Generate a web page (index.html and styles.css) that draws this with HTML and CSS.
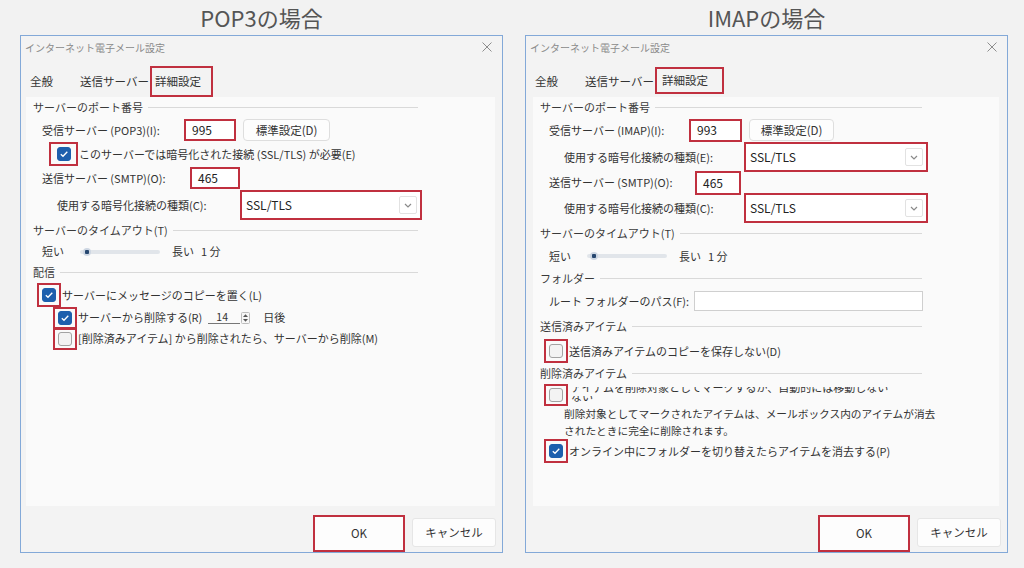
FILE: index.html
```html
<!DOCTYPE html>
<html lang="ja">

<head>
    <meta charset="UTF-8">
    <meta name="viewport" content="width=device-width, initial-scale=1.0">
    <title>POP3 / IMAP 詳細設定</title>
    <link rel="stylesheet" href="styles.css">
</head>

<body>
    <div class="page">
        <!-- POP3 -->
        <div class="column pop3">
            <h2 class="heading">POP3の場合</h2>
            <div class="dialog">
                <div class="titlebar">
                    <span>インターネット電子メール設定</span>
                    <svg class="close" width="10" height="10" viewBox="0 0 10 10"><path d="M0.5 0.5L9.5 9.5M9.5 0.5L0.5 9.5" /></svg>
                </div>
                <div class="tabs">
                    <span class="tab first">全般</span>
                    <span class="tab second">送信サーバー</span>
                    <span class="tab active">詳細設定</span>
                </div>
                <div class="panel">
                    <div class="group">サーバーのポート番号</div>
                    <div class="row">
                        <span class="lbl lbl-in">受信サーバー (POP3)(I):</span>
                        <span class="field field-in">995</span>
                        <span class="small-btn">標準設定(D)</span>
                    </div>
                    <div class="row check-row enc">
                        <span class="mark wide"><span class="box checked"><svg width="14" height="14" viewBox="0 0 14 14"><path d="M3.8 7.2L6 9.3L10.3 4.7" /></svg></span></span>
                        <span class="check-text">このサーバーでは暗号化された接続 (SSL/TLS) が必要(E)</span>
                    </div>
                    <div class="row">
                        <span class="lbl lbl-out">送信サーバー (SMTP)(O):</span>
                        <span class="field field-out">465</span>
                    </div>
                    <div class="row tall indent">
                        <span class="lbl lbl-enc">使用する暗号化接続の種類(C):</span>
                        <span class="select">SSL/TLS<span class="chevron"><svg width="8" height="5" viewBox="0 0 8 5"><path d="M1 1L4 4L7 1" /></svg></span></span>
                    </div>
                    <div class="group">サーバーのタイムアウト(T)</div>
                    <div class="row short">
                        <span class="lbl lbl-short">短い</span>
                        <span class="slider"><span class="thumb"></span></span>
                        <span>長い</span>
                        <span class="minutes">1 分</span>
                    </div>
                    <div class="group">配信</div>
                    <div class="row check-row">
                        <span class="mark"><span class="box checked"><svg width="14" height="14" viewBox="0 0 14 14"><path d="M3.8 7.2L6 9.3L10.3 4.7" /></svg></span></span>
                        <span class="check-text">サーバーにメッセージのコピーを置く(L)</span>
                    </div>
                    <div class="row short check-row sub">
                        <span class="mark"><span class="box checked"><svg width="14" height="14" viewBox="0 0 14 14"><path d="M3.8 7.2L6 9.3L10.3 4.7" /></svg></span></span>
                        <span class="check-text">サーバーから削除する(R)</span>
                        <span class="spin">14</span>
                        <svg class="spin-btn" width="9" height="12" viewBox="0 0 9 12"><rect x="0.5" y="0.5" width="8" height="11" rx="1" /><path d="M2 5L4.5 2.3L7 5Z M2 7L4.5 9.7L7 7Z" /></svg>
                        <span class="days">日後</span>
                    </div>
                    <div class="row short check-row sub">
                        <span class="mark"><span class="box"></span></span>
                        <span class="check-text">[削除済みアイテム] から削除されたら、サーバーから削除(M)</span>
                    </div>
                </div>
                <div class="footer">
                    <span class="btn ok">OK</span>
                    <span class="btn">キャンセル</span>
                </div>
            </div>
        </div>

        <!-- IMAP -->
        <div class="column imap">
            <h2 class="heading">IMAPの場合</h2>
            <div class="dialog">
                <div class="titlebar">
                    <span>インターネット電子メール設定</span>
                    <svg class="close" width="10" height="10" viewBox="0 0 10 10"><path d="M0.5 0.5L9.5 9.5M9.5 0.5L0.5 9.5" /></svg>
                </div>
                <div class="tabs">
                    <span class="tab first">全般</span>
                    <span class="tab second">送信サーバー</span>
                    <span class="tab active">詳細設定</span>
                </div>
                <div class="panel">
                    <div class="group">サーバーのポート番号</div>
                    <div class="row">
                        <span class="lbl lbl-in">受信サーバー (IMAP)(I):</span>
                        <span class="field field-in">993</span>
                        <span class="small-btn">標準設定(D)</span>
                    </div>
                    <div class="row tall indent">
                        <span class="lbl lbl-enc">使用する暗号化接続の種類(E):</span>
                        <span class="select">SSL/TLS<span class="chevron"><svg width="8" height="5" viewBox="0 0 8 5"><path d="M1 1L4 4L7 1" /></svg></span></span>
                    </div>
                    <div class="row short">
                        <span class="lbl lbl-out">送信サーバー (SMTP)(O):</span>
                        <span class="field field-out">465</span>
                    </div>
                    <div class="row tall indent">
                        <span class="lbl lbl-enc">使用する暗号化接続の種類(C):</span>
                        <span class="select">SSL/TLS<span class="chevron"><svg width="8" height="5" viewBox="0 0 8 5"><path d="M1 1L4 4L7 1" /></svg></span></span>
                    </div>
                    <div class="group">サーバーのタイムアウト(T)</div>
                    <div class="row">
                        <span class="lbl lbl-short">短い</span>
                        <span class="slider"><span class="thumb"></span></span>
                        <span>長い</span>
                        <span class="minutes">1 分</span>
                    </div>
                    <div class="group">フォルダー</div>
                    <div class="row">
                        <span class="lbl lbl-root">ルート フォルダーのパス(F):</span>
                        <span class="path-field"></span>
                    </div>
                    <div class="group loose">送信済みアイテム</div>
                    <div class="row check-row">
                        <span class="mark"><span class="box"></span></span>
                        <span class="check-text">送信済みアイテムのコピーを保存しない(D)</span>
                    </div>
                    <div class="group">削除済みアイテム</div>
                    <div class="row short check-row">
                        <span class="mark"><span class="box"></span></span>
                        <span class="ghost">
                            <span class="ghost-line"><span>アイテムを削除対象としてマークするが、自動的には移動しない</span></span>
                            <span class="ghost-line"><span>ない</span></span>
                        </span>
                    </div>
                    <div class="note">削除対象としてマークされたアイテムは、メールボックス内のアイテムが消去</div>
                    <div class="note">されたときに完全に削除されます。</div>
                    <div class="row check-row">
                        <span class="mark"><span class="box checked"><svg width="14" height="14" viewBox="0 0 14 14"><path d="M3.8 7.2L6 9.3L10.3 4.7" /></svg></span></span>
                        <span class="check-text">オンライン中にフォルダーを切り替えたらアイテムを消去する(P)</span>
                    </div>
                </div>
                <div class="footer">
                    <span class="btn ok">OK</span>
                    <span class="btn">キャンセル</span>
                </div>
            </div>
        </div>
    </div>
</body>

</html>
```

FILE: styles.css
```css
/* shared values */
:root {
    --red: #c0303f;
    --blue: #1d5fad;
    --text-color: #333;
    --line-color: #d9d9d9;
}

* {
    box-sizing: border-box;
}

body {
    margin: 0;
    background: #f2f2f2;
    font-family: "Noto Sans CJK JP", "Noto Sans", sans-serif;
    font-size: 11px;
    line-height: 1.3;
    color: var(--text-color);
}

.page {
    display: flex;
    gap: 22px;
    padding-left: 20px;
    height: 568px;
}

.column {
    width: 483px;
    display: flex;
    flex-direction: column;
}

.heading {
    margin: 0;
    height: 35px;
    line-height: 35px;
    text-align: center;
    font-size: 22px;
    font-weight: 400;
    color: #555;
}

/* dialog window */
.dialog {
    height: 518px;
    border: 1px solid #83a9d8;
    background: #f3f3f3;
    display: flex;
    flex-direction: column;
}

.titlebar {
    height: 22px;
    display: flex;
    align-items: center;
    justify-content: space-between;
    padding: 0 10px 0 4px;
    font-size: 10px;
    color: #8a8a8a;
}

.close path {
    stroke: #8d8d8d;
    stroke-width: 1;
    fill: none;
}

.tabs {
    height: 39px;
    display: flex;
    align-items: flex-end;
    padding-left: 9px;
    font-size: 11.5px;
}

.tab {
    height: 31px;
    display: flex;
    align-items: center;
}

.tab.first {
    width: 50px;
}

.tab.second {
    width: 70px;
}

.tab.active {
    border: 2px solid var(--red);
    padding: 0 10px 0 3px;
}

.imap .tab.active {
    padding: 0 14px 0 5px;
    height: 27px;
    margin-bottom: 3px;
}

.panel {
    flex: 1;
    margin: 0 7px 0 5px;
    padding-left: 7px;
    background: #fafafa;
}

.imap .panel {
    margin: 0 8px 0 7px;
}

/* group titles with a rule */
.group {
    height: 21px;
    display: flex;
    align-items: center;
    gap: 5px;
    margin-right: 77px;
    color: #3a3a3a;
}

.group::after {
    content: "";
    flex: 1;
    height: 1px;
    background: var(--line-color);
}

.group.loose {
    height: 26px;
}

.row {
    height: 24px;
    display: flex;
    align-items: center;
    padding-left: 9px;
    white-space: nowrap;
}

.row.tall {
    height: 30px;
}

.row.short {
    height: 21px;
}

.row.indent {
    padding-left: 24px;
}

.lbl {
    flex-shrink: 0;
}

.lbl-in { width: 142px; }
.lbl-out { width: 148px; }
.lbl-enc { width: 183px; }
.lbl-short { width: 38px; }
.imap .lbl-in { width: 140px; }
.imap .lbl-out { width: 146px; }
.imap .lbl-enc { width: 180px; }
.lbl-root { width: 145px; }

/* text fields */
.field {
    height: 22px;
    border: 2px solid var(--red);
    background: #fff;
    display: flex;
    align-items: center;
    padding-left: 6px;
    font-size: 12px;
    color: #222;
}

.field-in { width: 52px; }
.field-out { width: 50px; }
.imap .field-in { width: 53px; height: 23px; }
.imap .field-out { width: 46px; height: 24px; }

.small-btn {
    width: 87px;
    height: 22px;
    margin-left: 7px;
    display: flex;
    align-items: center;
    justify-content: center;
    background: #fdfdfd;
    border: 1px solid #dedede;
    border-radius: 4px;
    font-size: 11.5px;
}

.imap .small-btn {
    width: 85px;
}

.select {
    width: 182px;
    height: 30px;
    border: 2px solid var(--red);
    background: #fff;
    display: flex;
    align-items: center;
    justify-content: space-between;
    padding-left: 4px;
    font-size: 12px;
    color: #222;
}

.imap .select {
    width: 184px;
}

.chevron {
    width: 18px;
    height: 18px;
    margin-right: 3px;
    border: 1px solid #e2e2e2;
    border-radius: 2px;
    display: flex;
    align-items: center;
    justify-content: center;
}

.chevron path {
    stroke: #8a8a8a;
    stroke-width: 1.2;
    fill: none;
}

.path-field {
    width: 229px;
    height: 20px;
    background: #fff;
    border: 1px solid #cfcfcf;
}

/* slider */
.slider {
    position: relative;
    width: 80px;
    height: 4px;
    margin-right: 12px;
    border-radius: 2px;
    background: #e1e5ea;
}

.thumb {
    position: absolute;
    left: 3px;
    top: -2px;
    width: 8px;
    height: 8px;
    border-radius: 50%;
    background: radial-gradient(circle, #27476f 0 2px, #cdd6e2 2.5px);
}

.minutes {
    margin-left: 7px;
}

/* checkboxes */
.check-row {
    padding-left: 4px;
}

.check-row.sub {
    padding-left: 20px;
}

.check-row.enc {
    padding-left: 16px;
}

.mark {
    flex-shrink: 0;
    height: 24px;
    padding: 3px;
    border: 2px solid var(--red);
    display: flex;
    align-items: center;
}

.mark.wide {
    padding: 3px 5px 3px 6px;
}

.short .mark {
    height: 22px;
}

.box {
    width: 14px;
    height: 14px;
    border-radius: 3px;
    border: 1px solid #a3a3a3;
    background: #f3f3f3;
}

.box.checked {
    border-color: var(--blue);
    background: var(--blue);
}

.box svg {
    display: block;
    margin: -1px;
}

.box path {
    stroke: #fff;
    stroke-width: 1.3;
    fill: none;
}

.check-text {
    margin-left: 1px;
}

.spin {
    width: 32px;
    margin-left: 6px;
    padding-left: 8px;
    border-bottom: 1px solid #777;
    font-size: 10.5px;
    line-height: 12px;
}

.spin-btn {
    margin-left: 1px;
}

.spin-btn rect {
    fill: #f7f7f7;
    stroke: #bdbdbd;
}

.spin-btn path {
    fill: #555;
}

.days {
    margin-left: 13px;
}

/* clipped text in the deleted items section */
.ghost {
    display: flex;
    flex-direction: column;
    gap: 2px;
    margin-left: 3px;
}

.ghost-line {
    height: 7px;
    overflow: hidden;
    line-height: 14px;
}

.ghost-line span {
    display: block;
    margin-top: -7px;
}

.note {
    height: 17px;
    display: flex;
    align-items: center;
    padding-left: 24px;
    font-size: 10.7px;
    white-space: nowrap;
}

/* footer buttons */
.footer {
    height: 46px;
    display: flex;
    align-items: flex-end;
    justify-content: flex-end;
    gap: 7px;
    padding-right: 6px;
}

.btn {
    width: 84px;
    height: 29px;
    margin-bottom: 5px;
    display: flex;
    align-items: center;
    justify-content: center;
    background: #fdfdfd;
    border: 1px solid #e6e6e6;
    border-radius: 3px;
    font-size: 11.5px;
}

.btn.ok {
    width: 92px;
    height: 37px;
    margin-bottom: 0;
    border: 2px solid var(--red);
    border-radius: 0;
}
```
